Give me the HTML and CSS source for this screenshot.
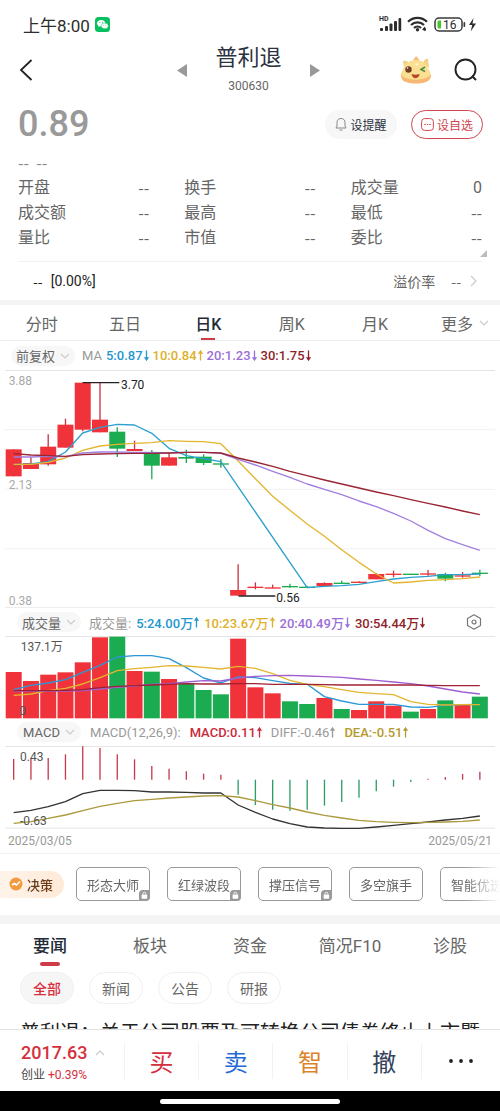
FILE: index.html
```html
<!DOCTYPE html>
<html lang="zh-CN">
<head>
<meta charset="utf-8">
<meta name="viewport" content="width=device-width, initial-scale=1">
<title>普利退 300630</title>
<link rel="stylesheet" href="styles.css">
</head>
<body>
<svg class="defs" aria-hidden="true">
  <symbol id="up" viewBox="0 0 5 11"><path d="M2.5 10.5V1M.6 3.8 2.5 1l1.9 2.8" fill="none" stroke="currentColor" stroke-width="1.3"/></symbol>
  <symbol id="down" viewBox="0 0 5 11"><path d="M2.5.5V10M.6 7.2 2.5 10l1.9-2.8" fill="none" stroke="currentColor" stroke-width="1.3"/></symbol>
  <symbol id="chev" viewBox="0 0 10 6"><path d="m1 1 4 4 4-4" fill="none" stroke="currentColor" stroke-width="1.2"/></symbol>
  <symbol id="lock" viewBox="0 0 11 11"><path d="M4 0h7v7a4 4 0 0 1-4 4H0V4a4 4 0 0 1 4-4z" fill="#999"/><rect x="2.6" y="4.5" width="5.6" height="4.2" rx=".6" fill="#fff"/><path d="M4 4.500V3.600a1.400 1.400 0 0 1 2.800 0v.9" fill="none" stroke="#fff" stroke-width=".9"/></symbol>
</svg>

<div class="status">
  <span class="clock">上午8:00</span>
  <svg class="wechat" viewBox="0 0 15 15"><rect width="15" height="15" rx="3.500" fill="#07c160"/><path d="M6.200 3C3.800 3 2 4.500 2 6.300c0 1 .6 1.900 1.500 2.500L3.200 10l1.400-.7c.5.100 1 .2 1.600.2 2.400 0 4.200-1.400 4.200-3.200S8.600 3 6.200 3z" fill="#fff"/><path d="M9.700 6.100c2 0 3.600 1.200 3.600 2.800 0 .9-.5 1.600-1.200 2.100l.3 1.100-1.300-.6c-.4.100-.9.200-1.400.2-2 0-3.600-1.200-3.600-2.800s1.600-2.800 3.600-2.800z" fill="#fff" stroke="#07c160" stroke-width=".5"/><g fill="#07c160"><circle cx="4.900" cy="5.400" r=".5"/><circle cx="7.600" cy="5.400" r=".5"/><circle cx="8.600" cy="8.300" r=".4"/><circle cx="10.900" cy="8.300" r=".4"/></g></svg>
  <svg class="sysicons" viewBox="0 0 98 18">
    <text x="0" y="6" class="hd">HD</text>
    <g fill="#2d2d2d"><rect x="1" y="13" width="3" height="3" rx="1"/><rect x="6" y="11" width="3" height="5" rx="1"/><rect x="10.500" y="8.500" width="3" height="7.500" rx="1"/><rect x="15" y="6" width="3" height="10" rx="1"/><rect x="19.500" y="3" width="2.700" height="13" rx="1"/></g>
    <g fill="none" stroke="#2d2d2d" stroke-width="2.200"><path d="M29 6.800a13.500 13.500 0 0 1 19 0"/><path d="M32 10a9.300 9.300 0 0 1 13 0"/><path d="M35 13a5 5 0 0 1 7 0"/></g>
    <circle cx="38.500" cy="14.800" r="1.700" fill="#2d2d2d"/><path d="m43 14.500 3-3v4.500zM47 12v3.500l-2 .5z" fill="#2d2d2d"/>
    <rect x="56" y="3" width="27" height="13" rx="4" fill="#fff" stroke="#3a3a3a" stroke-width="1.500"/><path d="M60 5.500h2v8h-2a1.500 1.500 0 0 1-1.500-1.500V7A1.500 1.500 0 0 1 60 5.500z" fill="#45c52b"/><rect x="84.500" y="7" width="1.700" height="5" rx=".8" fill="#3a3a3a"/>
    <text x="64" y="13.500" class="batt">16</text>
    <path d="M94.500 3 90 10h3.200l-1.500 6.500 5.300-8h-3.500z" fill="#2d2d2d"/>
  </svg>
</div>

<main class="content">
  <header class="header">
    <button class="iconbtn back" aria-label="返回"><svg viewBox="0 0 14 22" width="14" height="22"><path d="M12.500 1 2 11l10.500 10" fill="none" stroke="#222" stroke-width="1.800"/></svg></button>
    <div class="titlegroup">
      <button class="iconbtn" aria-label="上一只"><svg viewBox="0 0 10 13" width="10" height="13"><path d="M10 0v13L0 6.500z" fill="#999"/></svg></button>
      <div class="title"><h1>普利退</h1><span>300630</span></div>
      <button class="iconbtn" aria-label="下一只"><svg viewBox="0 0 10 13" width="10" height="13"><path d="M0 0v13l10-6.500z" fill="#999"/></svg></button>
    </div>
    <div class="headtools">
      <button class="iconbtn" aria-label="助手"><svg viewBox="0 0 32 28" width="32" height="28"><path d="M4 11 3 5c3-1 6 1 7 3zM23 7c1-3 3-5 5-4l1 9z" fill="#f4cf85"/><path d="M13 6c0-3 2-4 3-6 2 2 4 3 3 7z" fill="#f5bd80"/><path d="M16 4c7 0 11 4 12 9 3 2 4 8 1 11-4 4-22 4-26 0-3-3-3-7 0-10C4 8 9 4 16 4z" fill="#fbdf93"/><path d="M1 18c2 7 26 8 30 0 0 4-1 6-5 8-6 2-14 2-20 0-4-1-5-4-5-8z" fill="#f6b873"/><ellipse cx="8.500" cy="13.500" rx="3.200" ry="3.300" fill="#713f20"/><circle cx="7.500" cy="12" r=".8" fill="#fff"/><path d="m25 11-4 2.500 4 2" fill="none" stroke="#4f8c45" stroke-width="1.500"/><path d="M11.500 18c3 1 5 1 8 0 0 5-7 6-8 0z" fill="#b54723"/><path d="m15 8 2-1 2 1-2 2z" fill="#fff3c9"/></svg></button>
      <button class="iconbtn" aria-label="搜索"><svg viewBox="0 0 24 24" width="24" height="24"><circle cx="11.500" cy="11.500" r="10" fill="none" stroke="#222" stroke-width="1.900"/><path d="m18 18 4 4" stroke="#222" stroke-width="1.900"/></svg></button>
    </div>
  </header>

  <section class="quote">
    <div class="quotetop">
      <div class="price">0.89</div>
      <button class="pill remind"><svg viewBox="0 0 12 14" width="12" height="14"><path d="M1 11h10L10 9V5.500C10 3 8.500 1.500 6 1.500S2 3 2 5.500V9zM4.500 13h3" fill="none" stroke="#888" stroke-width="1"/></svg>设提醒</button>
      <button class="pill fav"><svg viewBox="0 0 13 13" width="13" height="13"><rect x=".6" y=".6" width="11.800" height="11.800" rx="3" fill="none" stroke="#cf4550"/><path d="M3.300 6.500h1.500M5.800 6.500h1.500M8.300 6.500h1.500" stroke="#cf4550" stroke-width="1.100"/></svg>设自选</button>
    </div>
    <div class="change dash">-- &nbsp;--</div>
    <dl class="stats">
      <div><dt>开盘</dt><dd class="dash">--</dd></div><div><dt>换手</dt><dd class="dash">--</dd></div><div><dt>成交量</dt><dd>0</dd></div>
      <div><dt>成交额</dt><dd class="dash">--</dd></div><div><dt>最高</dt><dd class="dash">--</dd></div><div><dt>最低</dt><dd class="dash">--</dd></div>
      <div><dt>量比</dt><dd class="dash">--</dd></div><div><dt>市值</dt><dd class="dash">--</dd></div><div><dt>委比</dt><dd class="dash">--</dd></div>
    </dl>
    <svg class="corner" viewBox="0 0 7 7"><path d="M7 0v7H0z" fill="#bbb"/></svg>
    <div class="premium"><span class="dash dark">--</span><span class="pct">[0.00%]</span><span class="rate">溢价率</span><span class="dash">--</span><svg viewBox="0 0 7 12" width="7" height="12"><path d="m1 1 5 5-5 5" fill="none" stroke="#ccc" stroke-width="1.300"/></svg></div>
  </section>

  <nav class="periods">
    <button>分时</button><button>五日</button><button class="on">日K</button><button>周K</button><button>月K</button><button class="more">更多<svg class="chev"><use href="#chev"/></svg></button>
  </nav>

  <section class="charts">
    <div class="legend price-legend">
      <button class="chip">前复权<svg class="chev"><use href="#chev"/></svg></button>
      <span class="grey">MA</span>
      <span class="blue">5:0.87<svg class="arr"><use href="#down"/></svg></span><span class="gold">10:0.84<svg class="arr"><use href="#up"/></svg></span><span class="violet">20:1.23<svg class="arr"><use href="#down"/></svg></span><span class="wine">30:1.75<svg class="arr"><use href="#down"/></svg></span>
    </div>
    <svg class="plot" id="price" viewBox="0 91 1500 715"></svg>
    <div class="legend">
      <button class="chip wide">成交量<svg class="chev"><use href="#chev"/></svg></button>
      <span class="grey">成交量:</span>
      <span class="blue">5:24.00万<svg class="arr"><use href="#up"/></svg></span><span class="gold">10:23.67万<svg class="arr"><use href="#up"/></svg></span><span class="violet">20:40.49万<svg class="arr"><use href="#down"/></svg></span><span class="wine">30:54.44万<svg class="arr"><use href="#down"/></svg></span>
      <button class="iconbtn gear" aria-label="设置"><svg viewBox="0 0 16 16" width="16" height="16"><path d="M8 .8 14.500 4.400v7.200L8 15.200 1.500 11.600V4.400z" fill="none" stroke="#777" stroke-width="1.200" stroke-linejoin="round"/><circle cx="8" cy="8" r="2" fill="none" stroke="#777" stroke-width="1.200"/></svg></button>
    </div>
    <svg class="plot" id="volume" viewBox="0 93 1500 248"></svg>
    <div class="legend macd-legend">
      <button class="chip">MACD<svg class="chev"><use href="#chev"/></svg></button>
      <span class="grey">MACD(12,26,9):</span>
      <span class="red">MACD:0.11<svg class="arr"><use href="#up"/></svg></span><span class="grey">DIFF:-0.46<svg class="arr"><use href="#up"/></svg></span><span class="olive">DEA:-0.51<svg class="arr"><use href="#up"/></svg></span>
    </div>
    <svg class="plot" id="macd" viewBox="0 421 1500 249"></svg>
    <div class="dates"><span>2025/03/05</span><span>2025/05/21</span></div>
  </section>

  <div class="tools">
    <button class="decide"><svg viewBox="0 0 14 14" width="14" height="14"><circle cx="7" cy="7" r="6.500" fill="#f29a3f"/><path d="m3 8 2.500-1.500L7.500 8 11 4.500" fill="none" stroke="#fff" stroke-width="1.700"/></svg>决策</button>
    <button class="tool">形态大师<svg class="lock"><use href="#lock"/></svg></button>
    <button class="tool">红绿波段<svg class="lock"><use href="#lock"/></svg></button>
    <button class="tool">撑压信号<svg class="lock"><use href="#lock"/></svg></button>
    <button class="tool">多空旗手</button>
    <button class="tool">智能优选</button>
  </div>

  <section class="news">
    <nav class="newstabs"><button class="on">要闻</button><button>板块</button><button>资金</button><button>简况F10</button><button>诊股</button></nav>
    <div class="filters"><button class="on">全部</button><button>新闻</button><button>公告</button><button>研报</button></div>
    <a class="headline" href="#">普利退：关于公司股票及可转换公司债券终止上市暨</a>
  </section>
</main>

<footer class="trade">
  <button class="index"><b>2017.63<svg class="chev"><use href="#chev"/></svg></b><span>创业 <em>+0.39%</em></span></button>
  <button class="buy">买</button><button class="sell">卖</button><button class="smart">智</button><button class="cancel">撤</button>
  <button class="dots" aria-label="更多"><svg viewBox="0 0 24 4" width="24" height="4"><g fill="#222"><circle cx="2" cy="2" r="1.900"/><circle cx="12" cy="2" r="1.900"/><circle cx="22" cy="2" r="1.900"/></g></svg></button>
</footer>
<div class="homebar"><span></span></div>
<script src="charts.js"></script>
</body>
</html>
```
FILE: styles.css
```css
* { box-sizing: border-box; }
body {
  margin: 0;
  height: 100vh;
  display: flex;
  flex-direction: column;
  background: #fff;
  color: #666;
  font-family: Roboto, "Noto Sans CJK SC", sans-serif;
  font-size: 16px;
}
button { border: 0; background: none; padding: 0; margin: 0; font: inherit; color: inherit; white-space: nowrap; }
svg { display: block; flex: none; }
.defs { position: absolute; width: 0; height: 0; }
.iconbtn { display: flex; }
.chev { width: 10px; height: 6px; color: #ccc; }
.arr { width: 5px; height: 11px; }
.dash { font-family: "Noto Sans CJK SC", sans-serif; }

.status { flex: none; display: flex; align-items: center; height: 46px; padding: 2px 23px 0; color: #2d2d2d; }
.clock { font-size: 17px; }
.wechat { width: 15px; height: 15px; margin-left: 5px; }
.sysicons { width: 98px; height: 18px; margin-left: auto; }
.hd { font-size: 7px; font-weight: 700; fill: #2d2d2d; }
.batt { font-size: 12px; fill: #2d2d2d; }

.content { flex: 1; min-height: 0; overflow: hidden auto; scrollbar-width: none; }
.header { display: grid; grid-template-columns: 1fr auto 1fr; align-items: center; height: 48px; margin-bottom: 2px; padding: 0 22px 0 19px; }
.titlegroup { display: flex; align-items: center; gap: 28px; }
.title { display: flex; flex-direction: column; align-items: center; gap: 8px; }
.title h1 { margin: 0; font-size: 22px; line-height: 24px; font-weight: 400; color: #2b3240; }
.title span { font-size: 12px; line-height: 16px; }
.headtools { display: flex; align-items: center; justify-content: flex-end; gap: 22px; }

.quote { padding: 0 18px; }
.quotetop { display: flex; align-items: center; gap: 14px; height: 56px; }
.price { flex: 1; font-size: 36px; font-weight: 500; color: #999; }
.pill { display: flex; align-items: center; justify-content: center; gap: 3px; height: 29px; width: 72px; border-radius: 15px; font-size: 12px; color: #2b3240; background: #f7f7f8; }
.fav { border: 1px solid #cf4550; color: #cf4550; background: #fff; }
.quotetop .fav { margin-right: -1px; }
.change { height: 23px; line-height: 20px; color: #888; }
.stats { display: grid; grid-template-columns: repeat(3, 1fr); column-gap: 35px; line-height: 25px; margin: 0; }
.stats > div { display: flex; justify-content: space-between; height: 25px; }
.stats dd { margin: 0; }
.corner { width: 7px; height: 7px; margin: 0 -5px 4px auto; }
.premium { display: flex; align-items: center; height: 39px; border-top: 1px solid #f2f2f2; padding: 0 5px 0 15px; font-size: 14px; }
.dark { color: #222; }
.pct { flex: 1; margin-left: 8px; color: #222; }
.rate { margin-right: 16px; }
.premium svg { margin-left: 9px; }

.periods { display: grid; grid-template-columns: repeat(6, 1fr); height: 41px; border-top: 5px solid #f4f4f5; border-bottom: 1px solid #eee; }
.periods button { display: flex; align-items: center; justify-content: center; gap: 6px; }
.periods .more { justify-content: flex-end; padding-right: 11px; }
.periods .on, .newstabs .on { position: relative; color: #222a38; font-weight: 500; }
.on::after { content: ""; position: absolute; left: 50%; bottom: 0; width: 14px; height: 2px; margin-left: -7px; background: #cf3b48; }

.legend { display: flex; align-items: center; gap: 5px; height: 28px; padding: 0 18px 0 17px; font-size: 13px; font-weight: 500; white-space: nowrap; }
.price-legend { gap: 4px; padding-left: 11px; height: 29px; }
.price-legend .chip { margin-right: 3px; }
.macd-legend { gap: 9px; height: 27px; }
.legend span { display: flex; align-items: center; gap: 1px; }
.chip { display: flex; align-items: center; justify-content: center; gap: 5px; width: 64px; height: 20px; border-radius: 10px; background: #f7f7f8; font-size: 13px; font-weight: 400; }
.wide { margin-right: 3px; }
.legend .grey { color: #999; font-weight: 400; }
.blue { color: #2497cf; }
.gold { color: #deb02a; }
.violet { color: #9b6fd6; }
.wine { color: #8f1f2b; }
.red { color: #c92a3b; }
.olive { color: #b59a2c; }
.gear { margin-left: auto; }
.plot { width: 100%; height: auto; }
.plot text { font-size: 36px; fill: #555; }
.plot .pale { fill: #aaa; }
.plot .mark { fill: #222; }
.dates { display: flex; justify-content: space-between; padding: 0 8px; font-size: 12px; line-height: 24px; color: #999; border-bottom: 1px solid #f2f2f2; }

.tools { display: flex; align-items: center; gap: 17px; height: 61px; overflow: hidden; -webkit-mask-image: linear-gradient(90deg, #000 93%, transparent); mask-image: linear-gradient(90deg, #000 93%, transparent); }
.decide { flex: none; display: flex; align-items: center; gap: 4px; width: 64px; height: 27px; margin-right: -5px; padding-left: 9px; border-radius: 0 14px 14px 0; background: linear-gradient(90deg, #fff3ea, #ffead7); color: #6b3a17; font-size: 13px; font-weight: 500; }
.tool { position: relative; flex: none; width: 74px; height: 34px; border: 1px solid #999; border-radius: 5px; font-size: 13px; }
.lock { position: absolute; right: -1px; bottom: -1px; width: 11px; height: 11px; }

.news { border-top: 9px solid #f4f4f5; }
.newstabs { display: grid; grid-template-columns: repeat(5, 1fr); height: 42px; font-size: 17px; }
.newstabs .on::after { width: 20px; height: 4px; margin-left: -10px; border-radius: 2px; }
.filters { display: flex; gap: 15px; padding: 6px 20px 15px; }
.filters button { width: 54px; height: 32px; border: 1px solid #f0f0f0; border-radius: 16px; font-size: 14px; }
.filters .on { background: #f6f6f7; color: #d5303d; font-weight: 500; }
.filters .on::after { content: none; }
.headline { display: block; padding: 0 20px; font-size: 20px; line-height: 28px; color: #222; text-decoration: none; white-space: nowrap; }

.trade { flex: none; display: grid; grid-template-columns: 25fr 15fr 15fr 15fr 15fr 16fr; align-items: center; height: 62px; border-top: 1px solid #e2e2e2; background: #fff; font-size: 24px; }
.trade > button { display: flex; justify-content: center; align-items: center; height: 36px; border-left: 1px solid #f2f2f2; }
.trade > .index { flex-direction: column; align-items: flex-start; gap: 2px; height: auto; padding: 4px 0 0 21px; border: 0; }
.index b { display: flex; align-items: center; gap: 8px; font-size: 18px; line-height: 22px; font-weight: 500; color: #d5303d; }
.index b .chev { transform: rotate(180deg); }
.index span { font-size: 12px; line-height: 18px; font-weight: 400; color: #444; }
.index em { font-style: normal; color: #d5303d; }
.trade .buy { color: #d5303d; }
.trade .sell { color: #2468d6; }
.trade .smart { color: #dc8328; }
.trade .cancel { color: #34425c; }
.homebar { flex: none; display: flex; align-items: center; justify-content: center; height: 20px; background: #000; }
.homebar span { width: 36%; height: 5px; border-radius: 3px; background: #fff; }
```
FILE: charts.js
```js
const RED = '#f0333a', GREEN = '#1bab50';
const cx = i => 41 + i * 51.8;
const line = (x1, y1, x2, y2, color, w = 3) =>
  `<path d="M${x1} ${y1}L${x2} ${y2}" stroke="${color}" stroke-width="${w}"/>`;
const rule = y => line(15, y, 1485, y, '#e4e4e4');
const faint = y => line(15, y, 1485, y, '#f1f1f1');
const curve = (ys, color) =>
  `<polyline points="${ys.map((y, i) => y === null ? '' : cx(i) + ',' + y).join(' ')}" fill="none" stroke="${color}" stroke-width="4" stroke-linejoin="round"/>`;
const label = (x, y, t, c = '') => `<text x="${x}" y="${y}" class="${c}">${t}</text>`;

// direction, body top, body bottom, wick top, wick bottom
const candles = [
  [1,329,410,329,410],[1,370,388,353,388],[1,321,374,284,378],[1,255,324,237,324],[1,129,270,129,275],
  [1,240,278,130,278],[0,276,327,263,352],[1,328,334,303,334],[0,339,378,331,419],[1,353,378,340,378],
  [0,352,357,330,370],[0,351,370,344,376],[0,371,375,358,384],[1,751,768,674,768],[1,741,744,728,749],
  [1,743,746,735,746],[0,739,742,732,744],[0,741,744,739,745],[1,730,739,728,739],[0,729,732,723,732],
  [1,726,729,725,730],[1,703,719,701,719],[1,702,705,693,713],[0,702,705,702,705],[1,701,705,691,708],
  [0,703,717,699,725],[1,707,711,697,714],[0,699,703,690,710]
];
const n = null;
document.getElementById('price').innerHTML =
  rule(92.5) + faint(270) + faint(449) + faint(627) + rule(804.5) +
  candles.map(([up, t, b, wt, wb], i) => {
    const c = up ? RED : GREEN;
    return line(cx(i), wt, cx(i), wb, up ? '#c93540' : GREEN, 4) + `<rect x="${cx(i) - 24}" y="${t}" width="48" height="${Math.max(b - t, 4)}" fill="${c}"/>`;
  }).join('') +
  curve([375,373,366,337,280,263,254,256,281,326,348,357,366,n,n,n,n,744,740,738,734,726,718,713,710,705,705,703], '#2ba0cf') +
  curve([374,374,368,355,332,319,314,311,309,303,305,306,312,364,417,470,512,553,590,630,668,703,730,727,722,720,717,712], '#e3b52f') +
  curve([352,352,350,351,340,337,337,338,338,340,338,338,341,359,376,395,413,433,449,465,484,501,521,544,572,597,615,632], '#a07fe0') +
  curve([342,346,348,350,345,343,342,341,341,340,338,338,340,355,367,380,395,408,421,433,445,457,468,480,491,502,514,525], '#9a2433') +
  line(248, 129, 358, 129, '#222', 4) + line(716, 769, 826, 769, '#222', 4) +
  label(363, 148, '3.70', 'mark') + label(829, 787, '0.56', 'mark') +
  label(26, 136, '3.88', 'pale') + label(26, 449, '2.13', 'pale') + label(26, 795, '0.38', 'pale');

const volumes = [201,228,209,202,172,97,95,198,200,222,235,255,268,101,247,265,289,297,279,312,315,289,302,320,312,286,299,275];
const fallDays = [6,8,10,11,12,16,17,19,23,25,27];
document.getElementById('volume').innerHTML =
  rule(94.5) +
  volumes.map((t, i) => `<rect x="${cx(i) - 24}" y="${t}" width="48" height="${340 - t}" fill="${fallDays.includes(i) ? GREEN : RED}"/>`).join('') +
  curve([254,241,234,224,202,181,156,152,152,161,188,219,234,216,218,227,235,238,275,288,298,298,298,306,307,301,299,298], '#2b98d8') +
  curve([271,267,257,250,237,218,197,191,187,182,183,187,192,184,190,206,226,238,245,254,262,266,269,290,298,300,299,299], '#e3b52f') +
  curve([258,258,258,258,257,252,247,243,238,236,231,227,228,219,214,212,211,213,215,217,222,226,231,236,243,252,261,267], '#a05fd0') +
  curve([257,257,257,256,254,248,244,242,240,238,236,237,237,236,236,238,238,238,239,240,240,240,240,240,241,242,242,242], '#a02035') +
  label(62, 137, '137.1万') + label(58, 330, '0');

const macd = [460,457,457,446,422,427,446,461,481,489,497,504,507,567,598,612,615,612,600,589,576,557,543,529,519,514,505,498];
document.getElementById('macd').innerHTML =
  rule(422.5) + rule(667.5) +
  macd.map((y, i) => line(cx(i), 522, cx(i), y, y < 522 ? '#c93a4c' : '#2f9d67', 4)).join('') +
  curve([621,614,603,588,564,554,554,555,559,559,560,562,562,598,620,640,654,664,667,668,668,664,659,654,649,643,638,631], '#333') +
  curve([653,648,638,628,615,602,593,585,581,577,574,571,570,574,585,597,607,619,629,637,644,648,650,651,650,649,647,643], '#ab9a3c') +
  label(60, 467, '0.43') + label(60, 659, '-0.63');
```
